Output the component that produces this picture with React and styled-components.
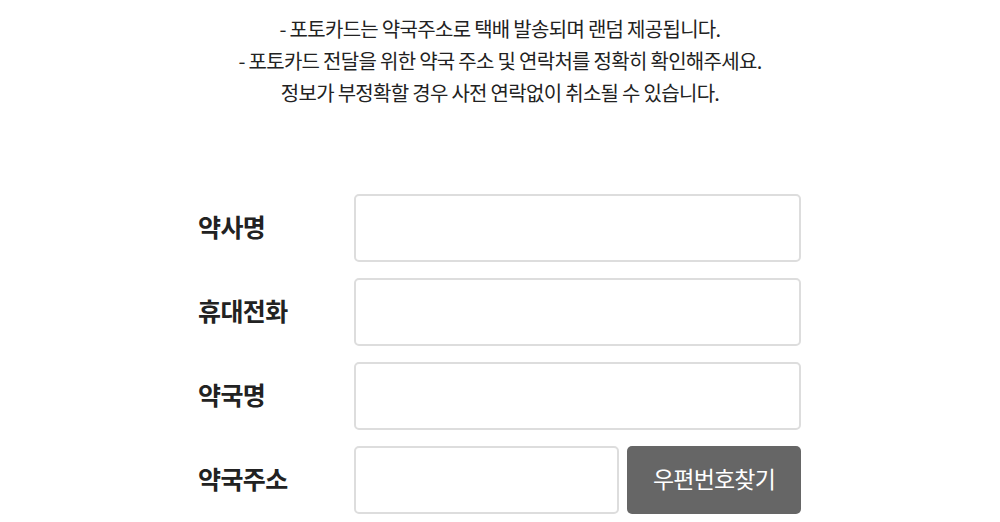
import React from 'react';
import styled, { createGlobalStyle } from 'styled-components';

const GlobalStyle = createGlobalStyle`
  body {
    margin: 0;
    background: #fff;
    font-family: 'Noto Sans CJK KR', 'Noto Sans', sans-serif;
    color: #222;
  }
`;

const Page = styled.div`
  width: 1000px;
  padding-top: 13px;
`;

const Notice = styled.div`
  text-align: center;
  font-size: 20px;
  line-height: 32px;
  letter-spacing: -0.7px;
  color: #222;
`;

const Line = styled.p`
  margin: 0;
  height: 32px;
`;

const Form = styled.div`
  width: 603px;
  margin: 85px 0 0 198px;
  display: flex;
  flex-direction: column;
  gap: 16px;
`;

const Row = styled.div`
  display: flex;
  align-items: center;
`;

const Label = styled.div`
  width: 156px;
  padding-bottom: 5px;
  font-size: 25px;
  font-weight: 700;
  letter-spacing: -0.6px;
  color: #222;
`;

const Field = styled.div`
  flex: 1;
  display: flex;
  gap: 8px;
`;

const Input = styled.input`
  box-sizing: border-box;
  height: 68px;
  width: ${p => (p.$w ? `${p.$w}px` : '100%')};
  border: 2px solid #ddd;
  border-radius: 5px;
  padding: 0 16px;
  font-size: 18px;
  font-family: inherit;
  outline: none;
`;

const Button = styled.button`
  flex: 1;
  height: 68px;
  padding: 0 0 4px;
  border: none;
  border-radius: 5px;
  background: #666;
  color: #fff;
  font-size: 23px;
  letter-spacing: -0.8px;
  font-family: inherit;
  cursor: pointer;
`;

const fields = ['약사명', '휴대전화', '약국명'];

export default function App() {
  return (
    <Page>
      <GlobalStyle />
      <Notice>
        <Line>- 포토카드는 약국주소로 택배 발송되며 랜덤 제공됩니다.</Line>
        <Line>- 포토카드 전달을 위한 약국 주소 및 연락처를 정확히 확인해주세요.</Line>
        <Line>정보가 부정확할 경우 사전 연락없이 취소될 수 있습니다.</Line>
      </Notice>
      <Form>
        {fields.map(f => (
          <Row key={f}>
            <Label>{f}</Label>
            <Field>
              <Input />
            </Field>
          </Row>
        ))}
        <Row>
          <Label>약국주소</Label>
          <Field>
            <Input $w={265} />
            <Button>우편번호찾기</Button>
          </Field>
        </Row>
      </Form>
    </Page>
  );
}
